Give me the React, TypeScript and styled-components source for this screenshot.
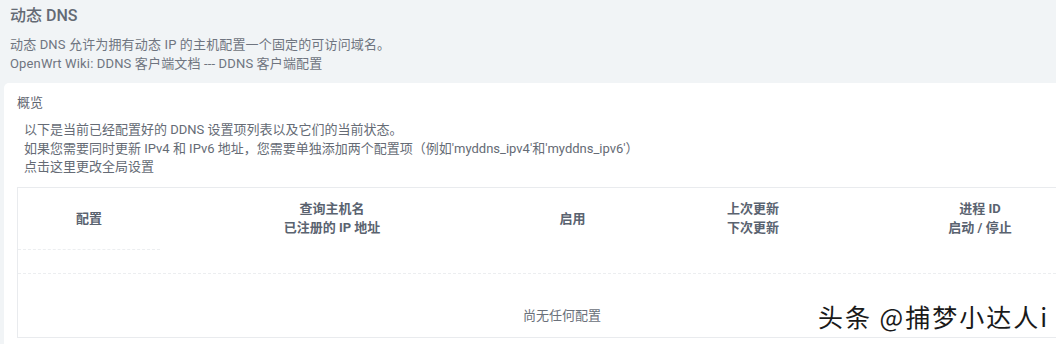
import styled, { createGlobalStyle } from "styled-components";

const GlobalStyle = createGlobalStyle`
  html, body {
    margin: 0;
    padding: 0;
    background: #f1f4f6;
    font-family: Roboto, "Noto Sans CJK SC", sans-serif;
    overflow: hidden;
  }
`;

interface Column {
  width: number;
  lines: string[];
}

const columns: Column[] = [
  { width: 142, lines: ["配置"] },
  { width: 344, lines: ["查询主机名", "已注册的 IP 地址"] },
  { width: 137, lines: ["启用"] },
  { width: 224, lines: ["上次更新", "下次更新"] },
  { width: 230, lines: ["进程 ID", "启动 / 停止"] },
];

export default function App() {
  return (
    <Page>
      <GlobalStyle />
      <Header>
        <Title>动态 DNS</Title>
        <Desc>
          <div>动态 DNS 允许为拥有动态 IP 的主机配置一个固定的可访问域名。</div>
          <div>OpenWrt Wiki: DDNS 客户端文档 --- DDNS 客户端配置</div>
        </Desc>
      </Header>
      <Card>
        <Legend>概览</Legend>
        <Intro>
          <div>以下是当前已经配置好的 DDNS 设置项列表以及它们的当前状态。</div>
          <div>
            如果您需要同时更新 IPv4 和 IPv6 地址，您需要单独添加两个配置项（例如'myddns_ipv4'和'myddns_ipv6'）
          </div>
          <div>点击这里更改全局设置</div>
        </Intro>
        <Table>
          <HeadRow>
            {columns.map((c, i) => (
              <HeadCell key={i} style={{ width: c.width }}>
                {c.lines.map((l) => (
                  <div key={l}>{l}</div>
                ))}
              </HeadCell>
            ))}
          </HeadRow>
          <SpacerRow>
            <SpacerCell />
          </SpacerRow>
          <EmptyRow>尚无任何配置</EmptyRow>
        </Table>
      </Card>
      <Watermark>头条 @捕梦小达人i</Watermark>
    </Page>
  );
}

const Page = styled.div`
  position: relative;
  width: 1056px;
  height: 344px;
  overflow: hidden;
`;

const Header = styled.div`
  padding: 6px 10px 0;
  height: 77px;
  box-sizing: border-box;
`;

const Title = styled.h2`
  margin: 0 0 10px;
  font-size: 16px;
  font-weight: 500;
  line-height: 20px;
  color: #646a74;
`;

const Desc = styled.div`
  font-size: 13px;
  line-height: 18.5px;
  letter-spacing: 0.15px;
  color: #6f7580;
`;

const Card = styled.div`
  margin: 6px 0 0 4px;
  background: #fff;
  border-radius: 5px 0 0 0;
  padding: 11px 0 0 13px;
  height: 300px;
`;

const Legend = styled.div`
  font-size: 13px;
  line-height: 18px;
  color: #5f6570;
`;

const Intro = styled.div`
  margin: 9px 0 0 7px;
  font-size: 13px;
  line-height: 18.5px;
  color: #656b75;
`;

const Table = styled.div`
  margin-top: 10px;
  width: 1100px;
  border: 1px solid #e9ebee;
  height: 151px;
  box-sizing: border-box;
`;

const HeadRow = styled.div`
  display: flex;
  height: 61px;
  align-items: center;
`;

const HeadCell = styled.div`
  text-align: center;
  font-size: 13px;
  font-weight: 700;
  line-height: 19px;
  color: #5a6370;
`;

const SpacerRow = styled.div`
  height: 25px;
  border-bottom: 1px dashed #eceef0;
  box-sizing: border-box;
`;

const SpacerCell = styled.div`
  width: 142px;
  border-top: 1px dashed #eceef0;
`;

const EmptyRow = styled.div`
  width: 1088px;
  text-align: center;
  padding-top: 33px;
  font-size: 13px;
  line-height: 18px;
  color: #6a707a;
`;

const Watermark = styled.div`
  position: absolute;
  left: 818px;
  top: 301px;
  font-size: 25px;
  letter-spacing: 2px;
  line-height: 30px;
  color: #1a1a1a;
  font-family: "Noto Sans CJK SC", sans-serif;
  text-shadow: 1px 1px 0 #fff, -1px -1px 0 #fff;
  white-space: nowrap;
`;
